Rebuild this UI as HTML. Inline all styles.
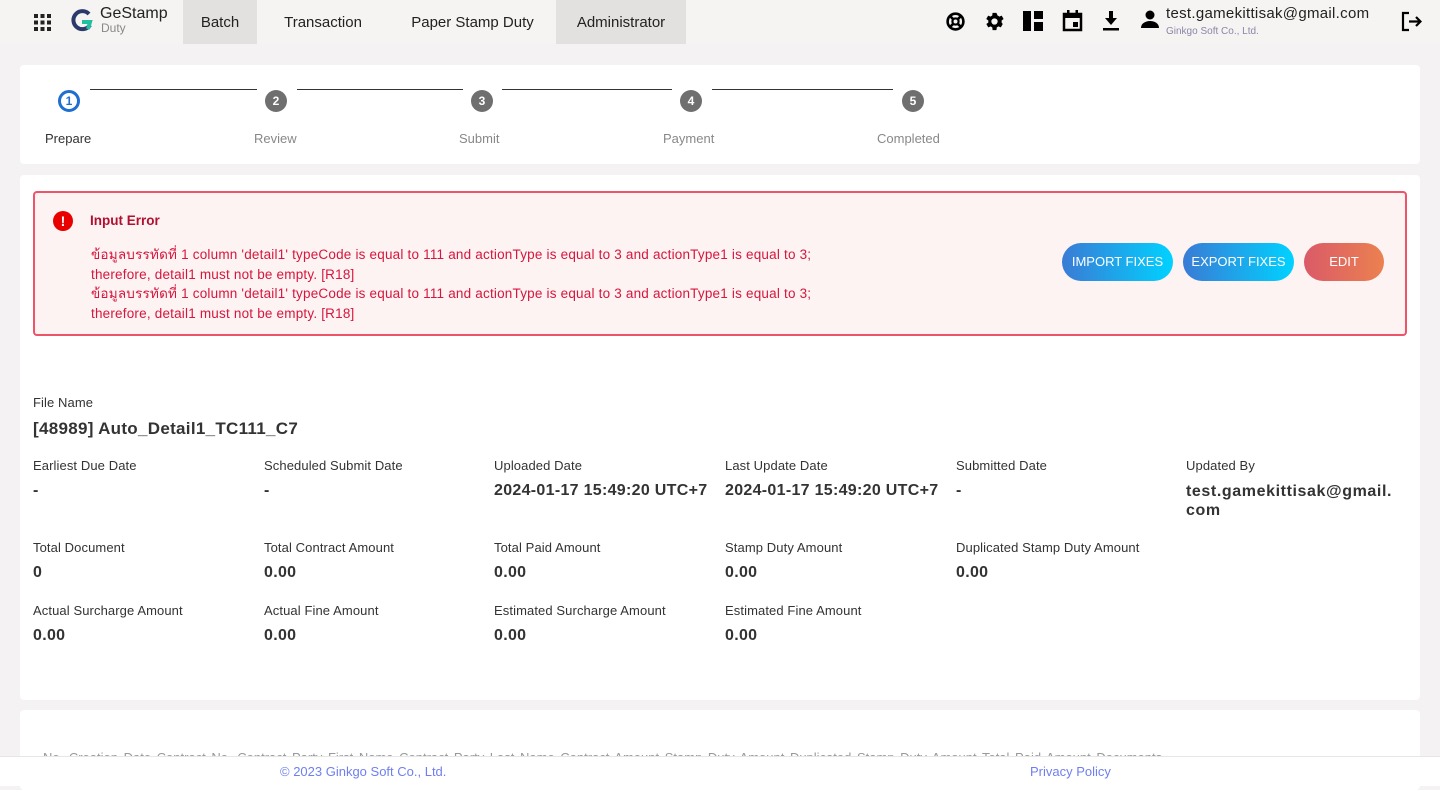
<!DOCTYPE html>
<html><head><meta charset="utf-8"><style>
*{box-sizing:border-box;margin:0;padding:0}
body{width:1440px;height:786px;overflow:hidden;background:#f4f2f2;font-family:"Liberation Sans","Noto Sans CJK SC",sans-serif;color:#333;position:relative}
.nav{height:44px;background:#f5f4f2;position:relative}
.nav .it{position:absolute;top:0;height:44px;line-height:46px;font-size:15px;color:#222;text-align:center}
.card{position:absolute;background:#fff;border-radius:4px}
.step{position:absolute;top:90px;width:22px;height:22px;border-radius:50%;background:#6f6f6f;color:#fff;font-size:12px;font-weight:bold;text-align:center;line-height:22px}
.sl{position:absolute;top:89px;height:1px;background:#333}
.lab{position:absolute;top:131px;font-size:13px;color:#888}
.btn{position:absolute;top:243px;height:38px;border-radius:19px;color:#fff;font-size:13px;line-height:38px;text-align:center}
.k{position:absolute;font-size:13px;color:#333;letter-spacing:.1px}
.v{position:absolute;font-size:16px;font-weight:bold;color:#333;letter-spacing:.3px}
.err{font-size:13.5px;color:#d6163c;line-height:19.5px}
</style></head><body>
<div class="nav">
<svg style="position:absolute;left:34px;top:14px" width="17" height="17" viewBox="0 0 17 17" fill="#222"><rect x="0" y="0" width="4" height="4"/><rect x="6.5" y="0" width="4" height="4"/><rect x="13" y="0" width="4" height="4"/><rect x="0" y="6.5" width="4" height="4"/><rect x="6.5" y="6.5" width="4" height="4"/><rect x="13" y="6.5" width="4" height="4"/><rect x="0" y="13" width="4" height="4"/><rect x="6.5" y="13" width="4" height="4"/><rect x="13" y="13" width="4" height="4"/></svg>
<svg style="position:absolute;left:70px;top:9px" width="24" height="24" viewBox="0 0 24 24"><path d="M19 5A9 9 0 1 0 20 16" stroke="#2a3a6a" stroke-width="4" fill="none"/><path d="M12 13h8l-2 7" stroke="#20c0a0" stroke-width="4" fill="none"/></svg>
<div style="position:absolute;left:100px;top:6px;font-size:16px;color:#222;line-height:16px">GeStamp</div>
<div style="position:absolute;left:101px;top:22px;font-size:12px;color:#888;line-height:12px">Duty</div>
<div class="it" style="left:183px;width:74px;background:#e2e1e0">Batch</div>
<div class="it" style="left:257px;width:132px">Transaction</div>
<div class="it" style="left:389px;width:167px">Paper Stamp Duty</div>
<div class="it" style="left:556px;width:130px;background:#e2e1e0">Administrator</div>
<svg style="position:absolute;left:945px;top:11px" width="21" height="21" viewBox="0 0 24 24"><circle cx="12" cy="12" r="9" stroke="#000" stroke-width="3" fill="none"/><circle cx="12" cy="12" r="3.5" stroke="#000" stroke-width="2.5" fill="none"/><path d="M5 5l4.5 4.5M19 5l-4.5 4.5M5 19l4.5-4.5M19 19l-4.5-4.5" stroke="#000" stroke-width="3"/></svg>
<svg style="position:absolute;left:983px;top:10px" width="23" height="23" viewBox="0 0 24 24"><path fill="#000" fill-rule="evenodd" d="M19.4 13a7.5 7.5 0 0 0 0-2l2.1-1.6-2-3.5-2.5 1a7 7 0 0 0-1.7-1L14 3h-4l-.4 2.9a7 7 0 0 0-1.7 1l-2.5-1-2 3.5L5.6 11a7.5 7.5 0 0 0 0 2l-2.1 1.6 2 3.5 2.5-1a7 7 0 0 0 1.7 1L10 21h4l.4-2.9a7 7 0 0 0 1.7-1l2.5 1 2-3.5zM12 15.3A3.3 3.3 0 1 1 12 8.7a3.3 3.3 0 0 1 0 6.6z"/></svg>
<svg style="position:absolute;left:1023px;top:11px" width="20" height="20" viewBox="0 0 20 20" fill="#000"><rect x="0" y="0" width="8" height="20"/><rect x="11" y="0" width="9" height="8"/><rect x="11" y="11" width="9" height="9"/></svg>
<svg style="position:absolute;left:1062px;top:10px" width="21" height="22" viewBox="0 0 21 22"><rect x="2" y="4" width="17" height="16" stroke="#000" stroke-width="2.5" fill="none"/><rect x="2" y="4" width="17" height="4" fill="#000"/><rect x="5" y="0" width="2.5" height="5" fill="#000"/><rect x="13.5" y="0" width="2.5" height="5" fill="#000"/><rect x="11" y="12" width="5" height="5" fill="#000"/></svg>
<svg style="position:absolute;left:1102px;top:11px" width="18" height="20" viewBox="0 0 18 20" fill="#000"><path d="M7 0h4v7h4l-6 7-6-7h4z"/><rect x="1" y="17" width="16" height="2.5"/></svg>
<svg style="position:absolute;left:1141px;top:10px" width="18" height="18" viewBox="0 0 18 18" fill="#000"><circle cx="9" cy="5" r="4.5"/><path d="M0 18c0-5 5-7 9-7s9 2 9 7z"/></svg>
<div style="position:absolute;left:1166px;top:5px;font-size:15px;color:#222;letter-spacing:.3px">test.gamekittisak@gmail.com</div>
<div style="position:absolute;left:1166px;top:26px;font-size:10px;color:#8a86a8">Ginkgo Soft Co., Ltd.</div>
<svg style="position:absolute;left:1401px;top:11px" width="21" height="21" viewBox="0 0 21 21" fill="none" stroke="#000" stroke-width="2.2"><path d="M8 2H2v17h6"/><path d="M8 10.5h11M15 6l4.5 4.5L15 15"/></svg>
</div>

<div class="card" style="left:20px;top:65px;width:1400px;height:99px"></div>
<div class="step" style="left:58px;background:#fff;border:3px solid #1f6fd0;color:#1f6fd0;line-height:16px">1</div>
<div class="sl" style="left:90px;width:167px"></div>
<div class="step" style="left:265px">2</div>
<div class="sl" style="left:297px;width:166px"></div>
<div class="step" style="left:471px">3</div>
<div class="sl" style="left:502px;width:170px"></div>
<div class="step" style="left:680px">4</div>
<div class="sl" style="left:712px;width:181px"></div>
<div class="step" style="left:902px">5</div>
<div class="lab" style="left:45px;color:#333">Prepare</div>
<div class="lab" style="left:254px">Review</div>
<div class="lab" style="left:459px">Submit</div>
<div class="lab" style="left:663px">Payment</div>
<div class="lab" style="left:877px">Completed</div>

<div class="card" style="left:20px;top:175px;width:1400px;height:525px"></div>
<div style="position:absolute;left:33px;top:191px;width:1374px;height:145px;border:2px solid #ee5468;border-radius:4px;background:#fdf3f3"></div>
<div style="position:absolute;left:53px;top:211px;width:20px;height:20px;border-radius:50%;background:#e80000;color:#fff;font-weight:bold;font-size:14px;text-align:center;line-height:20px">!</div>
<div style="position:absolute;left:90px;top:213px;font-size:13.5px;font-weight:bold;color:#b01030">Input Error</div>
<div class="err" style="position:absolute;left:91px;top:245px;letter-spacing:.2px">ข้อมูลบรรทัดที่ 1 column 'detail1' typeCode is equal to 111 and actionType is equal to 3 and actionType1 is equal to 3;<br>therefore, detail1 must not be empty. [R18]<br>ข้อมูลบรรทัดที่ 1 column 'detail1' typeCode is equal to 111 and actionType is equal to 3 and actionType1 is equal to 3;<br>therefore, detail1 must not be empty. [R18]</div>
<div class="btn" style="left:1062px;width:111px;background:linear-gradient(90deg,#3a7bd5,#00d2ff)">IMPORT FIXES</div>
<div class="btn" style="left:1183px;width:111px;background:linear-gradient(90deg,#3a7bd5,#00d2ff)">EXPORT FIXES</div>
<div class="btn" style="left:1304px;width:80px;background:linear-gradient(90deg,#da5a68,#eb8150)">EDIT</div>

<div class="k" style="left:33px;top:395px">File Name</div>
<div class="v" style="left:33px;top:419px;font-size:17px">[48989] Auto_Detail1_TC111_C7</div>

<div class="k" style="left:33px;top:458px">Earliest Due Date</div><div class="v" style="left:33px;top:482px">-</div>
<div class="k" style="left:264px;top:458px">Scheduled Submit Date</div><div class="v" style="left:264px;top:482px">-</div>
<div class="k" style="left:494px;top:458px">Uploaded Date</div><div class="v" style="left:494px;top:482px">2024-01-17 15:49:20 UTC+7</div>
<div class="k" style="left:725px;top:458px">Last Update Date</div><div class="v" style="left:725px;top:482px">2024-01-17 15:49:20 UTC+7</div>
<div class="k" style="left:956px;top:458px">Submitted Date</div><div class="v" style="left:956px;top:482px">-</div>
<div class="k" style="left:1186px;top:458px">Updated By</div><div class="v" style="left:1186px;top:482px;line-height:19px;letter-spacing:.6px">test.gamekittisak@gmail.<br>com</div>

<div class="k" style="left:33px;top:540px">Total Document</div><div class="v" style="left:33px;top:564px">0</div>
<div class="k" style="left:264px;top:540px">Total Contract Amount</div><div class="v" style="left:264px;top:564px">0.00</div>
<div class="k" style="left:494px;top:540px">Total Paid Amount</div><div class="v" style="left:494px;top:564px">0.00</div>
<div class="k" style="left:725px;top:540px">Stamp Duty Amount</div><div class="v" style="left:725px;top:564px">0.00</div>
<div class="k" style="left:956px;top:540px">Duplicated Stamp Duty Amount</div><div class="v" style="left:956px;top:564px">0.00</div>

<div class="k" style="left:33px;top:603px">Actual Surcharge Amount</div><div class="v" style="left:33px;top:627px">0.00</div>
<div class="k" style="left:264px;top:603px">Actual Fine Amount</div><div class="v" style="left:264px;top:627px">0.00</div>
<div class="k" style="left:494px;top:603px">Estimated Surcharge Amount</div><div class="v" style="left:494px;top:627px">0.00</div>
<div class="k" style="left:725px;top:603px">Estimated Fine Amount</div><div class="v" style="left:725px;top:627px">0.00</div>

<div class="card" style="left:20px;top:710px;width:1400px;height:80px;overflow:hidden"><div style="position:absolute;left:23px;top:40px;font-size:13px;color:#999;white-space:nowrap;word-spacing:2px">No. Creation Date Contract No. Contract Party First Name Contract Party Last Name Contract Amount Stamp Duty Amount Duplicated Stamp Duty Amount Total Paid Amount Documents</div></div>
<div style="position:absolute;left:0;top:756px;width:1440px;height:30px;background:#fff;border-top:1px solid #e6e6e6"></div>
<div style="position:absolute;left:280px;top:764px;font-size:13px;color:#6f7ff0">© 2023 Ginkgo Soft Co., Ltd.</div>
<div style="position:absolute;left:1030px;top:764px;font-size:13px;color:#6f7ff0">Privacy Policy</div>
</body></html>
